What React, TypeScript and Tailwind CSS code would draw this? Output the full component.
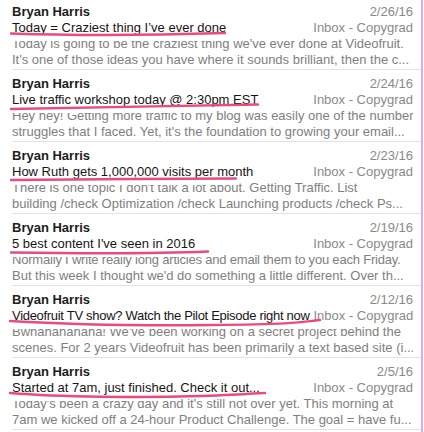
type Mail = {
    date: string;
    subject: string;
    lines: [string, string];
    pen: string;
    maskEnd: number;
    tight?: boolean;
    tightPreview?: boolean;
};

const mails: Mail[] = [
    {
        date: "2/26/16",
        subject: "Today = Craziest thing I\u2019ve ever done",
        lines: [
            "Today is going to be the craziest thing we've ever done at Videofruit.",
            "It's one of those ideas you have where it sounds brilliant, then the c...",
        ],
        pen: "M11 33.5 C 70 35.5, 160 35, 225 33",
        maskEnd: 228,
    },
    {
        date: "2/24/16",
        subject: "Live traffic workshop today @ 2:30pm EST",
        lines: [
            "Hey hey! Getting more traffic to my blog was easily one of the number",
            "struggles that I faced. Yet, it's the foundation to growing your email...",
        ],
        pen: "M11 37 C 80 35.5, 180 34, 258 32.5",
        maskEnd: 205,
    },
    {
        date: "2/23/16",
        subject: "How Ruth gets 1,000,000 visits per month",
        lines: [
            "There is one topic I don't talk a lot about. Getting Traffic. List",
            "building /check Optimization /check Launching products /check Ps...",
        ],
        pen: "M11 36 C 70 35, 170 35, 236 34.5",
        maskEnd: 236,
    },
    {
        date: "2/19/16",
        subject: "5 best content I've seen in 2016",
        lines: [
            "Normally I write really long articles and email them to you each Friday.",
            "But this week I thought we'd do something a little different. Over th...",
        ],
        pen: "M11 36.5 C 80 37.5, 160 37.5, 208 35.5",
        maskEnd: 208,
        tightPreview: true,
    },
    {
        date: "2/12/16",
        subject: "Videofruit TV show? Watch the Pilot Episode right now",
        lines: [
            "Bwhahahahaha! We've been working on a secret project behind the",
            "scenes. For 2 years Videofruit has been primarily a text based site (i...",
        ],
        pen: "M10 33 C 60 36, 120 38, 212 37 S 300 34, 320 32",
        maskEnd: 345,
        tight: true,
    },
    {
        date: "2/5/16",
        subject: "Started at 7am, just finished. Check it out...",
        lines: [
            "Today's been a crazy day and it's still not over yet. This morning at",
            "7am we kicked off a 24-hour Product Challenge. The goal = have fu...",
        ],
        pen: "M10 33 C 60 37, 140 38, 200 36 S 250 33, 265 33",
        maskEnd: 178,
    },
];

function MailRow({ mail }: { mail: Mail }) {
    return (
        <div className="relative pl-3 pb-[2px]">
            <div className="pt-[4px] pb-[1px] pr-2 border-b border-[#e2e2e2] text-[13px] leading-4">
                <div className="flex justify-between">
                    <span className="font-bold text-[#1c1c1c]">Bryan Harris</span>
                    <span className="text-[#8a8a8a]">{mail.date}</span>
                </div>
                <div className="flex justify-between gap-1 whitespace-nowrap">
                    <span className={mail.tight ? "text-[#151515] tracking-[-0.3px]" : "text-[#151515]"}>
                        {mail.subject}
                    </span>
                    <span className="text-[#8a8a8a] shrink-0">Inbox - Copygrad</span>
                </div>
                <p
                    className={
                        mail.tightPreview
                            ? "text-[#808080] whitespace-nowrap tracking-[-0.2px]"
                            : "text-[#808080] whitespace-nowrap overflow-hidden"
                    }
                >
                    {mail.lines[0]}
                </p>
                <p className="text-[#808080] whitespace-nowrap overflow-hidden">{mail.lines[1]}</p>
            </div>

            {/* hand drawn underline over the subject */}
            <svg className="absolute left-0 top-0 pointer-events-none" width="421" height="72">
                <rect x="11" y="35" width={mail.maskEnd - 11} height="6" fill="#ffffff" />
                <path d={mail.pen} fill="none" stroke="#eb4a80" strokeWidth="2.4" strokeLinecap="round" />
            </svg>
        </div>
    );
}

export default function App() {
    return (
        <div className="w-[424px] h-[432px] bg-white overflow-hidden" style={{ fontFamily: '"Liberation Sans", Arial, sans-serif' }}>
            <div className="w-[423px] border-r-2 border-[#dcaae8]">
                {mails.map((m) => (
                    <MailRow key={m.date} mail={m} />
                ))}
            </div>
        </div>
    );
}
